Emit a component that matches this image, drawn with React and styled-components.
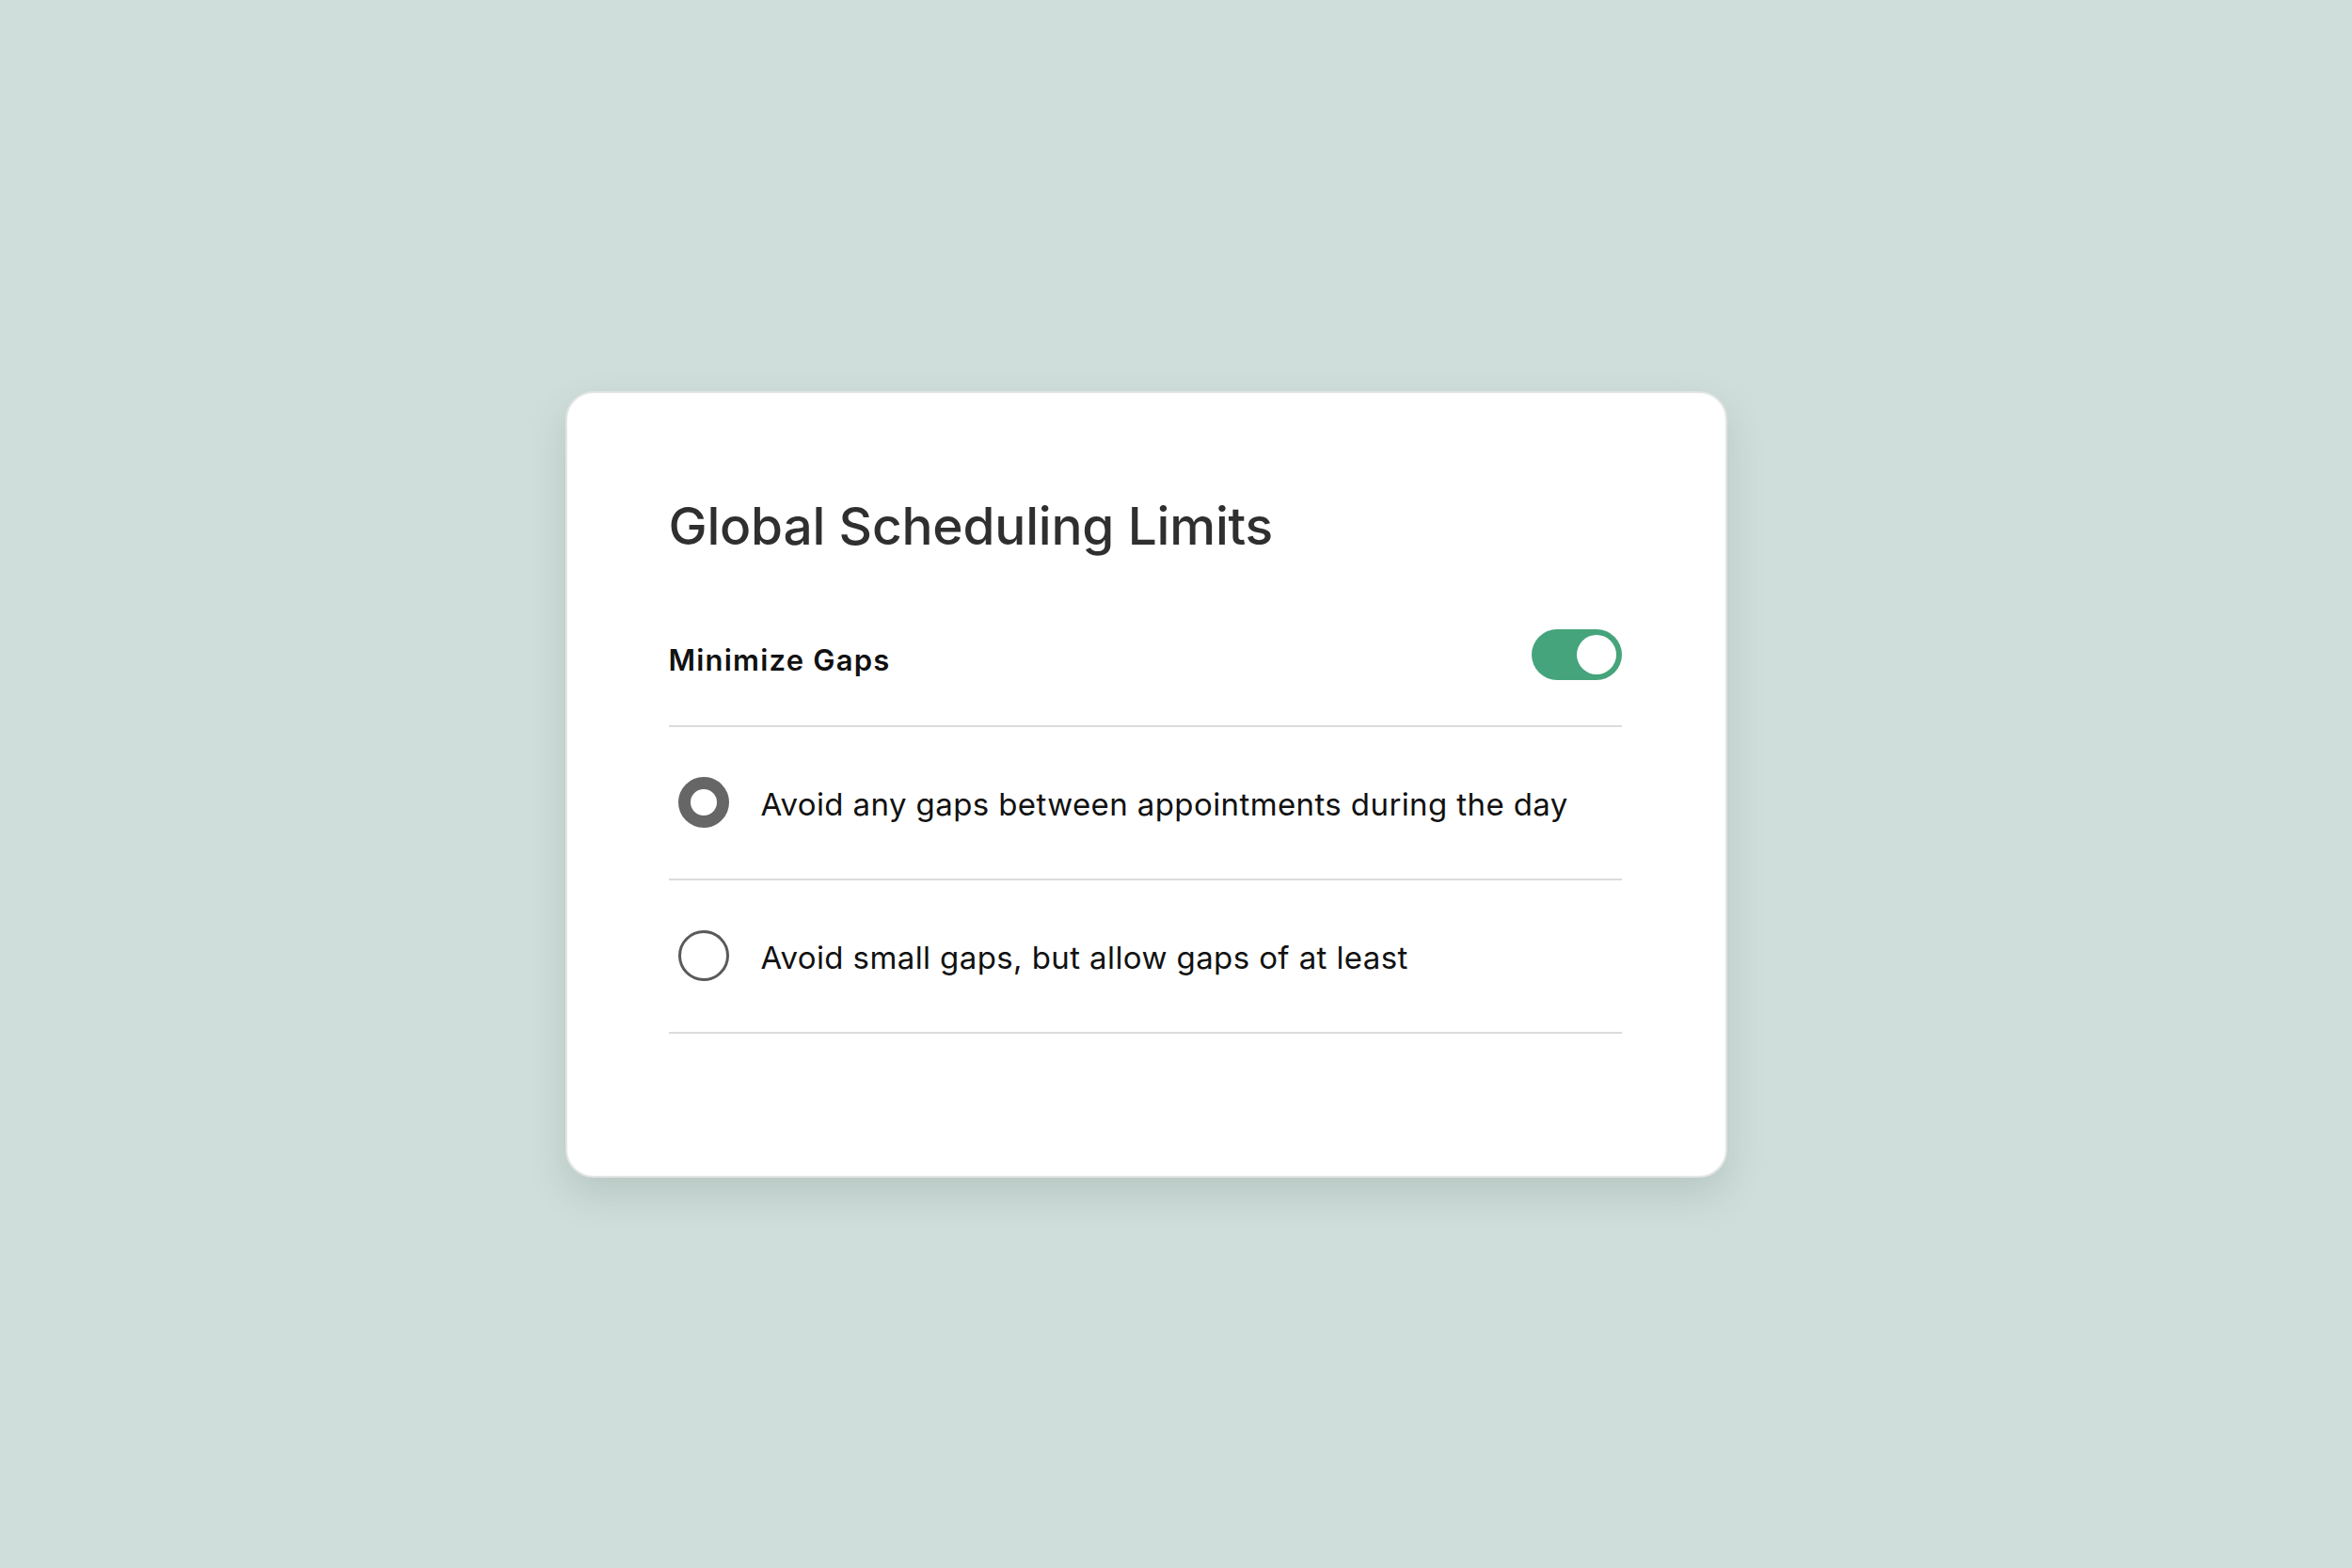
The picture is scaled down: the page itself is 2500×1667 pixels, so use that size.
import React, { useState } from 'react'
import styled, { createGlobalStyle } from 'styled-components'

const GlobalStyle = createGlobalStyle`
  body {
    margin: 0;
    background: #cfdeda;
    font-family: Inter, "Noto Sans", "Liberation Sans", sans-serif;
  }
`

const Page = styled.div`
  min-height: 1667px;
  display: flex;
  align-items: center;
  justify-content: center;
  padding-right: 64px;
  box-sizing: border-box;
`

const Card = styled.div`
  width: 1235px;
  box-sizing: border-box;
  background: #fff;
  border: 2px solid #e3e6e5;
  border-radius: 30px;
  padding: 109px 110px 151px 108px;
  box-shadow: 0 18px 40px rgba(60, 80, 75, 0.16);
`

const Title = styled.h1`
  margin: 0;
  font-size: 55px;
  line-height: 65px;
  font-weight: 500;
  color: #2f2f2f;
  letter-spacing: -0.2px;
`

const Header = styled.div`
  display: flex;
  align-items: center;
  justify-content: space-between;
  margin-top: 77px;
  padding-bottom: 48px;
  border-bottom: 2px solid #dcdcdc;
`

const Label = styled.span`
  font-size: 31px;
  line-height: 36px;
  font-weight: 600;
  color: #111;
  letter-spacing: 1.2px;
  margin-top: 12px;
`

const Switch = styled.button`
  width: 96px;
  height: 54px;
  border: none;
  padding: 6px;
  border-radius: 27px;
  background: ${props => props.on ? '#45a47b' : '#c9cccb'};
  display: flex;
  justify-content: ${props => props.on ? 'flex-end' : 'flex-start'};
  cursor: pointer;
`

const Knob = styled.span`
  width: 42px;
  height: 42px;
  border-radius: 50%;
  background: #fff;
`

const Option = styled.label`
  display: flex;
  align-items: center;
  height: 161px;
  border-bottom: 2px solid #dcdcdc;
  cursor: pointer;
`

const Radio = styled.span`
  width: 54px;
  height: 54px;
  box-sizing: border-box;
  margin-left: 10px;
  border-radius: 50%;
  border: ${props => props.checked ? '13px solid #666' : '3px solid #5a5a5a'};
  background: #fff;
  flex-shrink: 0;
`

const OptionText = styled.span`
  margin-left: 34px;
  font-size: 33px;
  line-height: 40px;
  letter-spacing: 0.4px;
  color: #111;
  margin-top: 4px;
`

const options = [
  'Avoid any gaps between appointments during the day',
  'Avoid small gaps, but allow gaps of at least',
]

export default function App() {
  const [on, setOn] = useState(true)
  const [picked, setPicked] = useState(0)

  return (
    <>
      <GlobalStyle />
      <Page>
        <Card>
          <Title>Global Scheduling Limits</Title>
          <Header>
            <Label>Minimize Gaps</Label>
            <Switch on={on} onClick={() => setOn(!on)}>
              <Knob />
            </Switch>
          </Header>
          {options.map((text, i) => (
            <Option key={i} onClick={() => setPicked(i)}>
              <Radio checked={picked === i} />
              <OptionText>{text}</OptionText>
            </Option>
          ))}
        </Card>
      </Page>
    </>
  )
}
